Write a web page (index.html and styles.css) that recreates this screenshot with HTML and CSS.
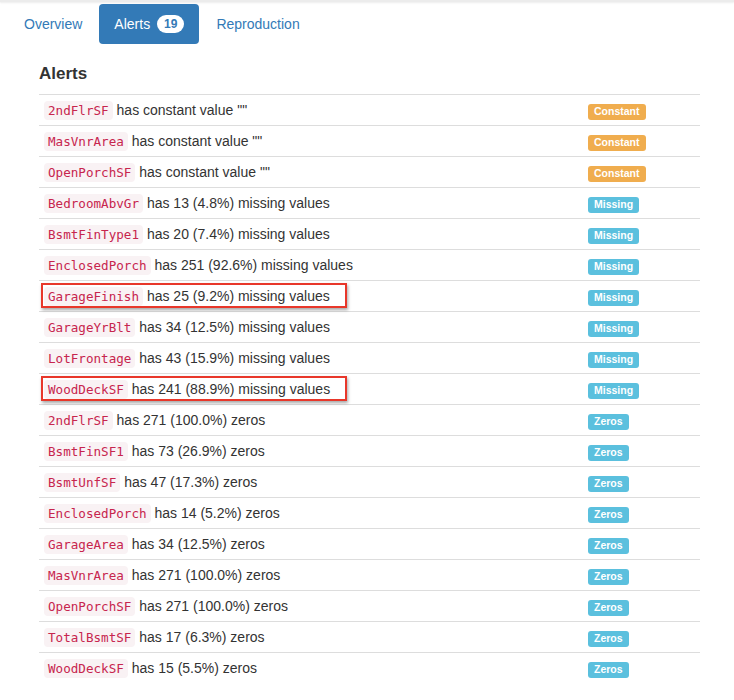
FILE: index.html
```html
<!DOCTYPE html>
<html>
<head>
<meta charset="utf-8">
<link rel="stylesheet" href="styles.css">
</head>
<body>
<div class="topbar"></div>
<ul class="nav">
  <li><a href="#">Overview</a></li>
  <li class="active"><a href="#">Alerts <span class="badge">19</span></a></li>
  <li><a href="#">Reproduction</a></li>
</ul>
<div class="content">
  <h4 class="title">Alerts</h4>
  <table class="alerts">
    <colgroup><col class="c1"><col class="c2"></colgroup>
    <tbody>
      <tr><td><code>2ndFlrSF</code> has constant value ""</td><td><span class="label constant">Constant</span></td></tr>
      <tr><td><code>MasVnrArea</code> has constant value ""</td><td><span class="label constant">Constant</span></td></tr>
      <tr><td><code>OpenPorchSF</code> has constant value ""</td><td><span class="label constant">Constant</span></td></tr>
      <tr><td><code>BedroomAbvGr</code> has 13 (4.8%) missing values</td><td><span class="label info">Missing</span></td></tr>
      <tr><td><code>BsmtFinType1</code> has 20 (7.4%) missing values</td><td><span class="label info">Missing</span></td></tr>
      <tr><td><code>EnclosedPorch</code> has 251 (92.6%) missing values</td><td><span class="label info">Missing</span></td></tr>
      <tr><td class="hl"><code>GarageFinish</code> has 25 (9.2%) missing values<span class="mark"></span></td><td><span class="label info">Missing</span></td></tr>
      <tr><td><code>GarageYrBlt</code> has 34 (12.5%) missing values</td><td><span class="label info">Missing</span></td></tr>
      <tr><td><code>LotFrontage</code> has 43 (15.9%) missing values</td><td><span class="label info">Missing</span></td></tr>
      <tr><td class="hl"><code>WoodDeckSF</code> has 241 (88.9%) missing values<span class="mark"></span></td><td><span class="label info">Missing</span></td></tr>
      <tr><td><code>2ndFlrSF</code> has 271 (100.0%) zeros</td><td><span class="label info">Zeros</span></td></tr>
      <tr><td><code>BsmtFinSF1</code> has 73 (26.9%) zeros</td><td><span class="label info">Zeros</span></td></tr>
      <tr><td><code>BsmtUnfSF</code> has 47 (17.3%) zeros</td><td><span class="label info">Zeros</span></td></tr>
      <tr><td><code>EnclosedPorch</code> has 14 (5.2%) zeros</td><td><span class="label info">Zeros</span></td></tr>
      <tr><td><code>GarageArea</code> has 34 (12.5%) zeros</td><td><span class="label info">Zeros</span></td></tr>
      <tr><td><code>MasVnrArea</code> has 271 (100.0%) zeros</td><td><span class="label info">Zeros</span></td></tr>
      <tr><td><code>OpenPorchSF</code> has 271 (100.0%) zeros</td><td><span class="label info">Zeros</span></td></tr>
      <tr><td><code>TotalBsmtSF</code> has 17 (6.3%) zeros</td><td><span class="label info">Zeros</span></td></tr>
      <tr><td><code>WoodDeckSF</code> has 15 (5.5%) zeros</td><td><span class="label info">Zeros</span></td></tr>
    </tbody>
  </table>
</div>
</body>
</html>
```

FILE: styles.css
```css
* { box-sizing: border-box; }
html, body { margin: 0; padding: 0; background: #fff; }
body {
  font-family: "Liberation Sans", Arial, sans-serif;
  font-size: 14px;
  line-height: 20px;
  color: #333;
}
.topbar {
  height: 2px;
  background: #ececec;
  box-shadow: 0 1px 2px rgba(0,0,0,0.08);
}
.nav {
  list-style: none;
  margin: 2px 0 0 0;
  padding: 0 0 0 9px;
  display: flex;
}
.nav li { margin-right: 2px; }
.nav a {
  display: block;
  padding: 10px 15px;
  color: #337ab7;
  text-decoration: none;
  border-radius: 4px;
}
.nav .active a {
  background: #337ab7;
  color: #fff;
}
.badge {
  display: inline-block;
  min-width: 10px;
  padding: 3px 7px;
  margin-left: 3px;
  font-size: 12px;
  font-weight: bold;
  line-height: 1;
  color: #337ab7;
  background: #fff;
  border-radius: 10px;
  text-align: center;
  vertical-align: middle;
  position: relative;
  top: -1px;
}
.content {
  padding: 0 34px 0 39px;
}
.title {
  margin: 20px 0 10px 0;
  font-size: 17px;
  font-weight: bold;
  line-height: 20px;
  color: #333;
}
.alerts {
  width: 661px;
  border-collapse: collapse;
  border-spacing: 0;
}
.c1 { width: 544px; }
.c2 { width: 117px; }
.alerts td {
  padding: 5px;
  height: 31px;
  border-top: 1px solid #ddd;
  vertical-align: top;
  line-height: 20px;
}
code {
  font-family: "DejaVu Sans Mono", "Liberation Mono", monospace;
  font-size: 12.6px;
  line-height: 14px;
  padding: 2px 4px;
  color: #c7254e;
  background: #f9f2f4;
  border-radius: 4px;
}
.label {
  display: inline-block;
  padding: 2px 6px 3px;
  font-size: 10.5px;
  font-weight: bold;
  line-height: 1;
  color: #fff;
  border-radius: 3px;
  vertical-align: baseline;
}
.constant { background: #f0ad4e; }
.info { background: #5bc0de; }
.hl { position: relative; }
.mark {
  position: absolute;
  left: 2px;
  top: 2px;
  width: 306px;
  height: 25px;
  border: 2px solid #e8372a;
  box-shadow: 1px 2px 3px rgba(0,0,0,0.35);
}
```
